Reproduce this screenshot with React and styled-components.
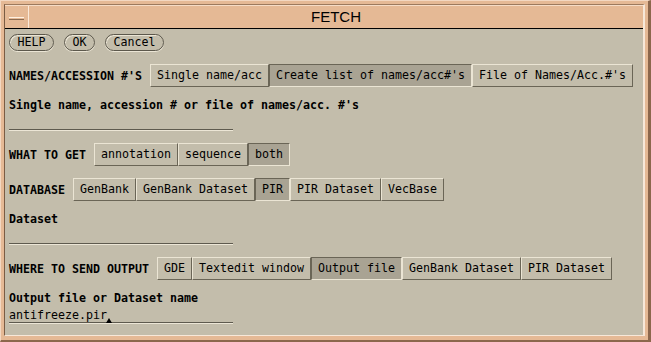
import React from 'react';
import styled, { createGlobalStyle } from 'styled-components';

const GlobalStyle = createGlobalStyle`
  html, body {
    margin: 0;
    padding: 0;
    overflow: hidden;
    background: #c3bdab;
  }
`;

const mono = `"DejaVu Sans Mono", "Liberation Mono", monospace`;

const Window = styled.div`
  width: 651px;
  height: 342px;
  box-sizing: border-box;
  background: #e5b995;
  border-top: 1px solid #f3d8c2;
  border-left: 1px solid #f3d8c2;
  border-right: 3px solid #8c674c;
  border-bottom: 2px solid #8c674c;
  padding: 3px 3px 4px 3px;
`;

const Inner = styled.div`
  height: 100%;
  box-sizing: border-box;
  display: flex;
  flex-direction: column;
  border-top: 1px solid #9c7a5e;
  border-left: 1px solid #7a5c44;
  border-right: 2px solid #f7e8d9;
  border-bottom: 1px solid #f7e8d9;
`;

const TitleBar = styled.div`
  display: flex;
  height: 22px;
  background: #e5b995;
  border-top: 1px solid #f6dcc6;
  border-bottom: 1px solid #000;
`;

const MenuBox = styled.div`
  width: 23px;
  display: flex;
  align-items: center;
  justify-content: center;
  border-right: 1px solid #fbe9d8;
`;

const MenuDash = styled.div`
  width: 15px;
  height: 1px;
  background: #e5b995;
  border-top: 1px solid #fff1e2;
  border-bottom: 1px solid #8a6a50;
  margin-top: 2px;
`;

const Title = styled.div`
  flex: 1;
  text-align: center;
  font-family: "Liberation Sans", Arial, sans-serif;
  font-size: 15px;
  line-height: 22px;
  color: #000;
`;

const Body = styled.div`
  flex: 1;
  background: #c3bdab;
  display: flex;
  flex-direction: column;
  align-items: flex-start;
  padding: 5px 4px 0 4px;
  font-family: ${mono};
  font-size: 11.63px;
  color: #000;
`;

const ControlRow = styled.div`
  display: flex;
  gap: 10px;
  height: 17px;
`;

const Pill = styled.button`
  font-family: ${mono};
  font-size: 11.63px;
  color: #000;
  height: 17px;
  line-height: 15px;
  padding: 0 7.5px;
  margin: 0;
  background: #c3bdab;
  border: 1px solid #5c584c;
  border-radius: 9px;
  box-shadow: inset 1px 1px 0 #ebe5d5, 0 1px 0 #ebe5d5;
  cursor: pointer;
`;

const OptionRow = styled.div`
  display: flex;
  align-items: center;
  height: 23px;
  margin-top: ${p => p.$top}px;
`;

const Label = styled.div`
  font-weight: bold;
  line-height: 14px;
  white-space: pre;
  margin-right: ${p => (p.$inline ? 8 : 0)}px;
  margin-top: ${p => p.$top || 0}px;
`;

const Choices = styled.div`
  display: flex;
`;

const Choice = styled.div`
  box-sizing: border-box;
  height: 23px;
  padding: 0 6px;
  line-height: 21px;
  white-space: pre;
  background: ${p => (p.$on ? '#a9a393' : '#c3bdab')};
  border: 1px solid;
  border-color: ${p =>
    p.$on ? '#6a6556 #ebe5d4 #ebe5d4 #6a6556' : '#ebe5d4 #6a6556 #6a6556 #ebe5d4'};
`;

const Field = styled.div`
  width: 224px;
  height: ${p => p.$h}px;
  display: flex;
  align-items: flex-end;
  line-height: 14px;
  border-bottom: 1px solid #5e5a4e;
  box-shadow: 0 1px 0 #ece6d6;
`;

const Caret = styled.span`
  width: 0;
  height: 0;
  border-left: 3px solid transparent;
  border-right: 3px solid transparent;
  border-bottom: 5px solid #000;
  margin-left: -1px;
  margin-bottom: -1px;
`;

const Option = ({ label, items, selected, top }) => (
  <OptionRow $top={top}>
    <Label $inline>{label}</Label>
    <Choices>
      {items.map(it => (
        <Choice key={it} $on={it === selected}>{it}</Choice>
      ))}
    </Choices>
  </OptionRow>
);

export default function App() {
  return (
    <>
      <GlobalStyle />
      <Window>
        <Inner>
          <TitleBar>
            <MenuBox><MenuDash /></MenuBox>
            <Title>FETCH</Title>
          </TitleBar>
          <Body>
            <ControlRow>
              <Pill>HELP</Pill>
              <Pill>OK</Pill>
              <Pill>Cancel</Pill>
            </ControlRow>
            <Option
              top={13}
              label="NAMES/ACCESSION #'S"
              items={['Single name/acc', "Create list of names/acc#'s", "File of Names/Acc.#'s"]}
              selected="Create list of names/acc#'s"
            />
            <Label $top={11}>Single name, accession # or file of names/acc. #'s</Label>
            <Field $h={17} />
            <Option
              top={13}
              label="WHAT TO GET"
              items={['annotation', 'sequence', 'both']}
              selected="both"
            />
            <Option
              top={12}
              label="DATABASE"
              items={['GenBank', 'GenBank Dataset', 'PIR', 'PIR Dataset', 'VecBase']}
              selected="PIR"
            />
            <Label $top={11}>Dataset</Label>
            <Field $h={17} />
            <Option
              top={13}
              label="WHERE TO SEND OUTPUT"
              items={['GDE', 'Textedit window', 'Output file', 'GenBank Dataset', 'PIR Dataset']}
              selected="Output file"
            />
            <Label $top={11}>Output file or Dataset name</Label>
            <Field $h={17}>
              <span>antifreeze.pir</span>
              <Caret />
            </Field>
          </Body>
        </Inner>
      </Window>
    </>
  );
}
